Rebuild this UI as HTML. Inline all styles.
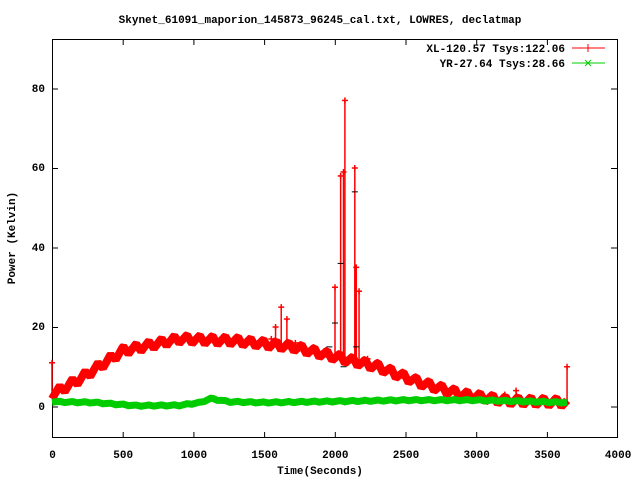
<!DOCTYPE html>
<html><head><meta charset="utf-8"><style>
html,body{margin:0;padding:0;background:#fff;width:640px;height:480px;overflow:hidden}
text{font-family:"Liberation Mono",monospace;font-weight:bold;font-size:11px;fill:#000}
</style></head><body>
<svg id="s" width="640" height="480" xmlns="http://www.w3.org/2000/svg">
<rect x="52.5" y="39.5" width="565" height="398" fill="none" stroke="#000" stroke-width="1"/>
<g id="ticks" stroke="#000"></g>
<text x="320" y="23" text-anchor="middle">Skynet_61091_maporion_145873_96245_cal.txt, LOWRES, declatmap</text>
<text x="45" y="410" text-anchor="end">0</text>
<text x="45" y="330" text-anchor="end">20</text>
<text x="45" y="251" text-anchor="end">40</text>
<text x="45" y="171" text-anchor="end">60</text>
<text x="45" y="92" text-anchor="end">80</text>
<g id="xl"></g>
<text x="320" y="474" text-anchor="middle">Time(Seconds)</text>
<text transform="translate(15,238) rotate(-90)" text-anchor="middle">Power (Kelvin)</text>
<text x="565" y="52" text-anchor="end">XL-120.57 Tsys:122.06</text>
<text x="565" y="67" text-anchor="end">YR-27.64 Tsys:28.66</text>
<line x1="572" y1="48" x2="605" y2="48" stroke="#f00"/><line x1="588" y1="44" x2="588" y2="52" stroke="#f00"/>
<line x1="572" y1="63" x2="605" y2="63" stroke="#0c0"/><path d="M585 60l6 6M591 60l-6 6" stroke="#0c0"/>
<g id="d"></g>
</svg>
<script>
var X=t=>52+t*0.1415,Y=v=>406.5-v*3.975,ns="http://www.w3.org/2000/svg";
function el(p,n,a){var e=document.createElementNS(ns,n);for(var k in a)e.setAttribute(k,a[k]);document.getElementById(p).appendChild(e);return e}
for(var i=0;i<=8;i++){var x=52.5+i*70.7;if(i>0&&i<8){el("ticks","line",{x1:x,y1:438,x2:x,y2:432});el("ticks","line",{x1:x,y1:39,x2:x,y2:45});}
el("xl","text",{x:x,y:458,"text-anchor":"middle"}).textContent=i*500;}
[0,20,40,60,80].forEach(v=>{var y=Y(v)+.5;el("ticks","line",{x1:52,y1:y,x2:58,y2:y});el("ticks","line",{x1:617,y1:y,x2:611,y2:y});});
function interp(pts,t){for(var i=1;i<pts.length;i++)if(t<=pts[i][0]){var a=pts[i-1],b=pts[i];return a[1]+(b[1]-a[1])*(t-a[0])/(b[0]-a[0]);}return pts[pts.length-1][1];}
var R=[[0,3],[200,7],[500,14],[900,17],[1300,16.5],[1700,15],[2000,12.5],[2300,10],[2600,6],[2900,3],[3200,1.5],[3640,1]];
var G=[[0,1.2],[300,1],[600,0.2],[900,0.3],[1050,1],[1120,2],[1250,1.2],[1500,1],[2000,1.3],[2500,1.6],[3000,1.6],[3640,1]];
var pr="",pg="";
for(var t=0;t<=3640;t+=5){var ph=(t%90)/90;var w=ph<0.6?ph/0.6:(1-ph)/0.4;pr+=(t?"L":"M")+X(t).toFixed(1)+" "+Y(interp(R,t)+2.2*(w-0.5)).toFixed(1);pg+=(t?"L":"M")+X(t).toFixed(1)+" "+Y(interp(G,t)+0.3*(w-0.5)).toFixed(1);}
el("d","path",{d:pr,stroke:"#f00","stroke-width":8,fill:"none","stroke-linejoin":"bevel"});
[[2000,30],[2040,58],[2060,59],[2070,77],[2140,60],[2150,35],[2170,29],[1620,25],[1660,22],[1580,20],[1550,17],[1720,16],[0,11],[3640,10],[3200,3],[3280,4],[2230,12]].forEach(s=>{
var x=X(s[0]);el("d","line",{x1:x,y1:Y(interp(R,s[0])),x2:x,y2:Y(s[1]),stroke:"#f00","stroke-width":1.5});el("d","line",{x1:x-3,y1:Y(s[1]),x2:x+3,y2:Y(s[1]),stroke:"#f00","stroke-width":1.5});el("d","line",{x1:x,y1:Y(s[1])-3,x2:x,y2:Y(s[1])+3,stroke:"#f00","stroke-width":1.5});});
[[1960,15],[2000,21],[2040,36],[2060,10],[2140,54],[2150,15]].forEach(s=>{var x=X(s[0]),y=Y(s[1]);el("d","line",{x1:x-3,y1:y,x2:x+3,y2:y,stroke:"#000"});});
el("d","path",{d:pg,stroke:"#0c0","stroke-width":7,fill:"none"});
</script>
</body></html>
